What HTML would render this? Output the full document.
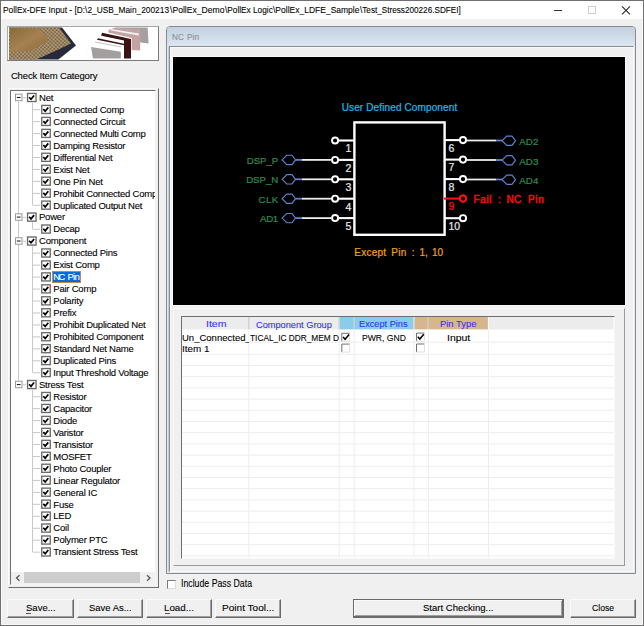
<!DOCTYPE html><html><head><meta charset="utf-8"><style>
*{margin:0;padding:0;box-sizing:border-box}
html,body{width:644px;height:626px;overflow:hidden;background:#f0f0f0;font-family:"Liberation Sans",sans-serif}
.t{position:absolute;white-space:nowrap;font-family:"Liberation Sans",sans-serif;-webkit-text-stroke:0.1px currentColor}
.a{position:absolute}
svg{position:absolute;left:0;top:0;overflow:visible}
</style></head><body>
<div class="a" style="left:0px;top:0px;width:644px;height:626px;background:#f0f0f0;border:1px solid #707070"></div>
<div class="a" style="left:1px;top:1px;width:642px;height:624px;background:transparent;border:1px solid #fafafa;border-top:0"></div>
<div class="a" style="left:1px;top:1px;width:642px;height:18px;background:#fff;"></div>
<div class="t" style="left:3.00px;top:4.70px;font-size:9.8px;line-height:9.8px;color:#000;transform:scaleX(0.8517);transform-origin:0 0;">PollEx-DFE Input - [D:\2_USB_Main_200213</div>
<div class="t" style="left:169.50px;top:4.70px;font-size:9.8px;line-height:9.8px;color:#000;transform:scaleX(0.8793);transform-origin:0 0;">\PollEx_Demo</div>
<div class="t" style="left:225.40px;top:4.70px;font-size:9.8px;line-height:9.8px;color:#000;transform:scaleX(0.8437);transform-origin:0 0;">\PollEx Logic</div>
<div class="t" style="left:273.20px;top:4.70px;font-size:9.8px;line-height:9.8px;color:#000;transform:scaleX(0.8677);transform-origin:0 0;">\PollEx_LDFE_Sample</div>
<div class="t" style="left:359.50px;top:4.70px;font-size:9.8px;line-height:9.8px;color:#000;transform:scaleX(0.8336);transform-origin:0 0;">\Test_Stress200226.SDFEI]</div>
<div class="a" style="left:554px;top:10px;width:8px;height:1px;background:#333;"></div>
<div class="a" style="left:588px;top:6px;width:8px;height:8px;background:transparent;border:1px solid #cfcfcf"></div>
<svg width="644" height="30"><path d="M622 6.3L630 14.3M630 6.3L622 14.3" stroke="#222" stroke-width="1.05"/></svg><div class="a" style="left:7px;top:26px;width:152px;height:35px;background:#fff;border:1px solid #a8a8a8;border-right-color:#7a7a7a;border-bottom-color:#7a7a7a"></div>
<svg width="170" height="70">
<defs><pattern id="pins" width="2.6" height="2.6" patternUnits="userSpaceOnUse" patternTransform="rotate(42)">
<rect width="2.6" height="2.6" fill="#505060"/><circle cx="1.3" cy="1.3" r="1.05" fill="#d2aa60"/></pattern>
<linearGradient id="gold" x1="0" y1="0" x2="1" y2="1"><stop offset="0" stop-color="#8a6a3a"/><stop offset="0.5" stop-color="#a58050"/><stop offset="1" stop-color="#8e6c3c"/></linearGradient></defs>
<polygon points="9,27.5 62,27.5 76,45.6 58.4,59.5 9,59.5" fill="#272a3a"/>
<polygon points="9,27.5 59,27.5 71,43.5 53,52 36,59.5 9,59.5" fill="url(#pins)"/>
<polygon points="10,28.2 38.5,28.2 47.9,38.1 47.9,41.3 29.8,51.2 10,51.8" fill="url(#gold)"/>
<polygon points="114.8,27.5 147.6,27.5 148.6,43.4 140.7,42.4" fill="#a6a0a0"/>
<polygon points="108.4,30 114.8,27.8 140.2,29.5 140.2,50.4 131.7,49.9 131.7,37.9 108.4,32.5" fill="#c3a4a4"/>
<polygon points="110.9,29 138.7,33.5 138.7,35.4 110.9,30.5" fill="#fff" opacity="0.85"/>
<polygon points="102,32.8 131,38.9 131,58.5 124,58.5 124,41 101,36.2" fill="#3a1414"/>
<polygon points="100,35.5 124,40.5 124,58.5 121,58.5 121,44 99,39" fill="#fff"/>
<polygon points="98,38.2 124,43.7 124,45.2 97,39.8" fill="#3a1414"/>
<polygon points="95,41.5 121,46.5 121,47.5 95,42.5" fill="#c8c4c4"/>
<polygon points="91,46.9 120.8,51.8 120.8,58.5 93,58.5" fill="#a39f9f"/>
</svg><div class="t" style="left:10.90px;top:71.26px;font-size:9.5px;line-height:9.5px;color:#000;letter-spacing:-0.144px;">Check Item Category</div>
<div class="a" style="left:8px;top:88px;width:151px;height:500px;background:#f0f0f0;border:1px solid #fafafa;border-right-color:#6e6e6e;border-bottom-color:#6e6e6e"></div>
<div class="a" style="left:10px;top:90px;width:146px;height:495px;background:#fff;border:1px solid #707070;border-right-color:#f4f4f4;border-bottom-color:#f4f4f4"></div>
<div class="a" style="left:11px;top:91px;width:144px;height:481px;overflow:hidden"><div class="a" style="left:-11px;top:-91px;width:170px;height:600px"><svg width="160" height="600">
<path d="M18.5 101.70V380.74" stroke="#c8c8c8"/>
<rect x="27.55" y="93.45" width="8.5" height="8.1" fill="#fff" stroke="#6a6a6a" stroke-width="1.35"/>
<path d="M29.10 97.20L31.00 99.30L34.10 95.50" stroke="#000" stroke-width="1.7" fill="none"/>
<rect x="15.5" y="94.20" width="6.5" height="6.5" fill="#fff" stroke="#9a9a9a"/>
<path d="M16.8 97.50h3.8" stroke="#222" stroke-width="1.1"/>
<path d="M22.5 97.70h3.5" stroke="#c8c8c8"/>
<rect x="41.75" y="105.41" width="8.5" height="8.1" fill="#fff" stroke="#6a6a6a" stroke-width="1.35"/>
<path d="M43.30 109.16L45.20 111.26L48.30 107.46" stroke="#000" stroke-width="1.7" fill="none"/>
<path d="M33 109.66h7" stroke="#c8c8c8"/>
<rect x="41.75" y="117.37" width="8.5" height="8.1" fill="#fff" stroke="#6a6a6a" stroke-width="1.35"/>
<path d="M43.30 121.12L45.20 123.22L48.30 119.42" stroke="#000" stroke-width="1.7" fill="none"/>
<path d="M33 121.62h7" stroke="#c8c8c8"/>
<rect x="41.75" y="129.33" width="8.5" height="8.1" fill="#fff" stroke="#6a6a6a" stroke-width="1.35"/>
<path d="M43.30 133.08L45.20 135.18L48.30 131.38" stroke="#000" stroke-width="1.7" fill="none"/>
<path d="M33 133.58h7" stroke="#c8c8c8"/>
<rect x="41.75" y="141.29" width="8.5" height="8.1" fill="#fff" stroke="#6a6a6a" stroke-width="1.35"/>
<path d="M43.30 145.04L45.20 147.14L48.30 143.34" stroke="#000" stroke-width="1.7" fill="none"/>
<path d="M33 145.54h7" stroke="#c8c8c8"/>
<rect x="41.75" y="153.25" width="8.5" height="8.1" fill="#fff" stroke="#6a6a6a" stroke-width="1.35"/>
<path d="M43.30 157.00L45.20 159.10L48.30 155.30" stroke="#000" stroke-width="1.7" fill="none"/>
<path d="M33 157.50h7" stroke="#c8c8c8"/>
<rect x="41.75" y="165.21" width="8.5" height="8.1" fill="#fff" stroke="#6a6a6a" stroke-width="1.35"/>
<path d="M43.30 168.96L45.20 171.06L48.30 167.26" stroke="#000" stroke-width="1.7" fill="none"/>
<path d="M33 169.46h7" stroke="#c8c8c8"/>
<rect x="41.75" y="177.17" width="8.5" height="8.1" fill="#fff" stroke="#6a6a6a" stroke-width="1.35"/>
<path d="M43.30 180.92L45.20 183.02L48.30 179.22" stroke="#000" stroke-width="1.7" fill="none"/>
<path d="M33 181.42h7" stroke="#c8c8c8"/>
<rect x="41.75" y="189.13" width="8.5" height="8.1" fill="#fff" stroke="#6a6a6a" stroke-width="1.35"/>
<path d="M43.30 192.88L45.20 194.98L48.30 191.18" stroke="#000" stroke-width="1.7" fill="none"/>
<path d="M33 193.38h7" stroke="#c8c8c8"/>
<rect x="41.75" y="201.09" width="8.5" height="8.1" fill="#fff" stroke="#6a6a6a" stroke-width="1.35"/>
<path d="M43.30 204.84L45.20 206.94L48.30 203.14" stroke="#000" stroke-width="1.7" fill="none"/>
<path d="M33 205.34h7" stroke="#c8c8c8"/>
<rect x="27.55" y="213.05" width="8.5" height="8.1" fill="#fff" stroke="#6a6a6a" stroke-width="1.35"/>
<path d="M29.10 216.80L31.00 218.90L34.10 215.10" stroke="#000" stroke-width="1.7" fill="none"/>
<rect x="15.5" y="213.80" width="6.5" height="6.5" fill="#fff" stroke="#9a9a9a"/>
<path d="M16.8 217.10h3.8" stroke="#222" stroke-width="1.1"/>
<path d="M22.5 217.30h3.5" stroke="#c8c8c8"/>
<rect x="41.75" y="225.01" width="8.5" height="8.1" fill="#fff" stroke="#6a6a6a" stroke-width="1.35"/>
<path d="M43.30 228.76L45.20 230.86L48.30 227.06" stroke="#000" stroke-width="1.7" fill="none"/>
<path d="M33 229.26h7" stroke="#c8c8c8"/>
<rect x="27.55" y="236.97" width="8.5" height="8.1" fill="#fff" stroke="#6a6a6a" stroke-width="1.35"/>
<path d="M29.10 240.72L31.00 242.82L34.10 239.02" stroke="#000" stroke-width="1.7" fill="none"/>
<rect x="15.5" y="237.72" width="6.5" height="6.5" fill="#fff" stroke="#9a9a9a"/>
<path d="M16.8 241.02h3.8" stroke="#222" stroke-width="1.1"/>
<path d="M22.5 241.22h3.5" stroke="#c8c8c8"/>
<rect x="41.75" y="248.93" width="8.5" height="8.1" fill="#fff" stroke="#6a6a6a" stroke-width="1.35"/>
<path d="M43.30 252.68L45.20 254.78L48.30 250.98" stroke="#000" stroke-width="1.7" fill="none"/>
<path d="M33 253.18h7" stroke="#c8c8c8"/>
<rect x="41.75" y="260.89" width="8.5" height="8.1" fill="#fff" stroke="#6a6a6a" stroke-width="1.35"/>
<path d="M43.30 264.64L45.20 266.74L48.30 262.94" stroke="#000" stroke-width="1.7" fill="none"/>
<path d="M33 265.14h7" stroke="#c8c8c8"/>
<rect x="41.75" y="272.85" width="8.5" height="8.1" fill="#fff" stroke="#6a6a6a" stroke-width="1.35"/>
<path d="M43.30 276.60L45.20 278.70L48.30 274.90" stroke="#000" stroke-width="1.7" fill="none"/>
<path d="M33 277.10h7" stroke="#c8c8c8"/>
<rect x="41.75" y="284.81" width="8.5" height="8.1" fill="#fff" stroke="#6a6a6a" stroke-width="1.35"/>
<path d="M43.30 288.56L45.20 290.66L48.30 286.86" stroke="#000" stroke-width="1.7" fill="none"/>
<path d="M33 289.06h7" stroke="#c8c8c8"/>
<rect x="41.75" y="296.77" width="8.5" height="8.1" fill="#fff" stroke="#6a6a6a" stroke-width="1.35"/>
<path d="M43.30 300.52L45.20 302.62L48.30 298.82" stroke="#000" stroke-width="1.7" fill="none"/>
<path d="M33 301.02h7" stroke="#c8c8c8"/>
<rect x="41.75" y="308.73" width="8.5" height="8.1" fill="#fff" stroke="#6a6a6a" stroke-width="1.35"/>
<path d="M43.30 312.48L45.20 314.58L48.30 310.78" stroke="#000" stroke-width="1.7" fill="none"/>
<path d="M33 312.98h7" stroke="#c8c8c8"/>
<rect x="41.75" y="320.69" width="8.5" height="8.1" fill="#fff" stroke="#6a6a6a" stroke-width="1.35"/>
<path d="M43.30 324.44L45.20 326.54L48.30 322.74" stroke="#000" stroke-width="1.7" fill="none"/>
<path d="M33 324.94h7" stroke="#c8c8c8"/>
<rect x="41.75" y="332.65" width="8.5" height="8.1" fill="#fff" stroke="#6a6a6a" stroke-width="1.35"/>
<path d="M43.30 336.40L45.20 338.50L48.30 334.70" stroke="#000" stroke-width="1.7" fill="none"/>
<path d="M33 336.90h7" stroke="#c8c8c8"/>
<rect x="41.75" y="344.61" width="8.5" height="8.1" fill="#fff" stroke="#6a6a6a" stroke-width="1.35"/>
<path d="M43.30 348.36L45.20 350.46L48.30 346.66" stroke="#000" stroke-width="1.7" fill="none"/>
<path d="M33 348.86h7" stroke="#c8c8c8"/>
<rect x="41.75" y="356.57" width="8.5" height="8.1" fill="#fff" stroke="#6a6a6a" stroke-width="1.35"/>
<path d="M43.30 360.32L45.20 362.42L48.30 358.62" stroke="#000" stroke-width="1.7" fill="none"/>
<path d="M33 360.82h7" stroke="#c8c8c8"/>
<rect x="41.75" y="368.53" width="8.5" height="8.1" fill="#fff" stroke="#6a6a6a" stroke-width="1.35"/>
<path d="M43.30 372.28L45.20 374.38L48.30 370.58" stroke="#000" stroke-width="1.7" fill="none"/>
<path d="M33 372.78h7" stroke="#c8c8c8"/>
<rect x="27.55" y="380.49" width="8.5" height="8.1" fill="#fff" stroke="#6a6a6a" stroke-width="1.35"/>
<path d="M29.10 384.24L31.00 386.34L34.10 382.54" stroke="#000" stroke-width="1.7" fill="none"/>
<rect x="15.5" y="381.24" width="6.5" height="6.5" fill="#fff" stroke="#9a9a9a"/>
<path d="M16.8 384.54h3.8" stroke="#222" stroke-width="1.1"/>
<path d="M22.5 384.74h3.5" stroke="#c8c8c8"/>
<rect x="41.75" y="392.45" width="8.5" height="8.1" fill="#fff" stroke="#6a6a6a" stroke-width="1.35"/>
<path d="M43.30 396.20L45.20 398.30L48.30 394.50" stroke="#000" stroke-width="1.7" fill="none"/>
<path d="M33 396.70h7" stroke="#c8c8c8"/>
<rect x="41.75" y="404.41" width="8.5" height="8.1" fill="#fff" stroke="#6a6a6a" stroke-width="1.35"/>
<path d="M43.30 408.16L45.20 410.26L48.30 406.46" stroke="#000" stroke-width="1.7" fill="none"/>
<path d="M33 408.66h7" stroke="#c8c8c8"/>
<rect x="41.75" y="416.37" width="8.5" height="8.1" fill="#fff" stroke="#6a6a6a" stroke-width="1.35"/>
<path d="M43.30 420.12L45.20 422.22L48.30 418.42" stroke="#000" stroke-width="1.7" fill="none"/>
<path d="M33 420.62h7" stroke="#c8c8c8"/>
<rect x="41.75" y="428.33" width="8.5" height="8.1" fill="#fff" stroke="#6a6a6a" stroke-width="1.35"/>
<path d="M43.30 432.08L45.20 434.18L48.30 430.38" stroke="#000" stroke-width="1.7" fill="none"/>
<path d="M33 432.58h7" stroke="#c8c8c8"/>
<rect x="41.75" y="440.29" width="8.5" height="8.1" fill="#fff" stroke="#6a6a6a" stroke-width="1.35"/>
<path d="M43.30 444.04L45.20 446.14L48.30 442.34" stroke="#000" stroke-width="1.7" fill="none"/>
<path d="M33 444.54h7" stroke="#c8c8c8"/>
<rect x="41.75" y="452.25" width="8.5" height="8.1" fill="#fff" stroke="#6a6a6a" stroke-width="1.35"/>
<path d="M43.30 456.00L45.20 458.10L48.30 454.30" stroke="#000" stroke-width="1.7" fill="none"/>
<path d="M33 456.50h7" stroke="#c8c8c8"/>
<rect x="41.75" y="464.21" width="8.5" height="8.1" fill="#fff" stroke="#6a6a6a" stroke-width="1.35"/>
<path d="M43.30 467.96L45.20 470.06L48.30 466.26" stroke="#000" stroke-width="1.7" fill="none"/>
<path d="M33 468.46h7" stroke="#c8c8c8"/>
<rect x="41.75" y="476.17" width="8.5" height="8.1" fill="#fff" stroke="#6a6a6a" stroke-width="1.35"/>
<path d="M43.30 479.92L45.20 482.02L48.30 478.22" stroke="#000" stroke-width="1.7" fill="none"/>
<path d="M33 480.42h7" stroke="#c8c8c8"/>
<rect x="41.75" y="488.13" width="8.5" height="8.1" fill="#fff" stroke="#6a6a6a" stroke-width="1.35"/>
<path d="M43.30 491.88L45.20 493.98L48.30 490.18" stroke="#000" stroke-width="1.7" fill="none"/>
<path d="M33 492.38h7" stroke="#c8c8c8"/>
<rect x="41.75" y="500.09" width="8.5" height="8.1" fill="#fff" stroke="#6a6a6a" stroke-width="1.35"/>
<path d="M43.30 503.84L45.20 505.94L48.30 502.14" stroke="#000" stroke-width="1.7" fill="none"/>
<path d="M33 504.34h7" stroke="#c8c8c8"/>
<rect x="41.75" y="512.05" width="8.5" height="8.1" fill="#fff" stroke="#6a6a6a" stroke-width="1.35"/>
<path d="M43.30 515.80L45.20 517.90L48.30 514.10" stroke="#000" stroke-width="1.7" fill="none"/>
<path d="M33 516.30h7" stroke="#c8c8c8"/>
<rect x="41.75" y="524.01" width="8.5" height="8.1" fill="#fff" stroke="#6a6a6a" stroke-width="1.35"/>
<path d="M43.30 527.76L45.20 529.86L48.30 526.06" stroke="#000" stroke-width="1.7" fill="none"/>
<path d="M33 528.26h7" stroke="#c8c8c8"/>
<rect x="41.75" y="535.97" width="8.5" height="8.1" fill="#fff" stroke="#6a6a6a" stroke-width="1.35"/>
<path d="M43.30 539.72L45.20 541.82L48.30 538.02" stroke="#000" stroke-width="1.7" fill="none"/>
<path d="M33 540.22h7" stroke="#c8c8c8"/>
<rect x="41.75" y="547.93" width="8.5" height="8.1" fill="#fff" stroke="#6a6a6a" stroke-width="1.35"/>
<path d="M43.30 551.68L45.20 553.78L48.30 549.98" stroke="#000" stroke-width="1.7" fill="none"/>
<path d="M33 552.18h7" stroke="#c8c8c8"/>
<path d="M32.5 102.70V205.34" stroke="#c8c8c8"/>
<path d="M32.5 222.30V229.26" stroke="#c8c8c8"/>
<path d="M32.5 246.22V372.78" stroke="#c8c8c8"/>
<path d="M32.5 389.74V552.18" stroke="#c8c8c8"/>
</svg><div class="t" style="left:39.00px;top:92.86px;font-size:9.5px;line-height:9.5px;color:#000;letter-spacing:-0.220px;">Net</div>
<div class="t" style="left:53.30px;top:104.82px;font-size:9.5px;line-height:9.5px;color:#000;letter-spacing:-0.220px;">Connected Comp</div>
<div class="t" style="left:53.30px;top:116.78px;font-size:9.5px;line-height:9.5px;color:#000;letter-spacing:-0.220px;">Connected Circuit</div>
<div class="t" style="left:53.30px;top:128.74px;font-size:9.5px;line-height:9.5px;color:#000;letter-spacing:-0.220px;">Connected Multi Comp</div>
<div class="t" style="left:53.30px;top:140.70px;font-size:9.5px;line-height:9.5px;color:#000;letter-spacing:-0.220px;">Damping Resistor</div>
<div class="t" style="left:53.30px;top:152.66px;font-size:9.5px;line-height:9.5px;color:#000;letter-spacing:-0.220px;">Differential Net</div>
<div class="t" style="left:53.30px;top:164.62px;font-size:9.5px;line-height:9.5px;color:#000;letter-spacing:-0.220px;">Exist Net</div>
<div class="t" style="left:53.30px;top:176.58px;font-size:9.5px;line-height:9.5px;color:#000;letter-spacing:-0.220px;">One Pin Net</div>
<div class="t" style="left:53.30px;top:188.54px;font-size:9.5px;line-height:9.5px;color:#000;letter-spacing:-0.220px;">Prohibit Connected Comp</div>
<div class="t" style="left:53.30px;top:200.50px;font-size:9.5px;line-height:9.5px;color:#000;letter-spacing:-0.220px;">Duplicated Output Net</div>
<div class="t" style="left:39.00px;top:212.46px;font-size:9.5px;line-height:9.5px;color:#000;letter-spacing:-0.220px;">Power</div>
<div class="t" style="left:53.30px;top:224.42px;font-size:9.5px;line-height:9.5px;color:#000;letter-spacing:-0.220px;">Decap</div>
<div class="t" style="left:39.00px;top:236.38px;font-size:9.5px;line-height:9.5px;color:#000;letter-spacing:-0.220px;">Component</div>
<div class="t" style="left:53.30px;top:248.34px;font-size:9.5px;line-height:9.5px;color:#000;letter-spacing:-0.220px;">Connected Pins</div>
<div class="t" style="left:53.30px;top:260.30px;font-size:9.5px;line-height:9.5px;color:#000;letter-spacing:-0.220px;">Exist Comp</div>
<div class="a" style="left:52px;top:271px;width:29px;height:12px;background:#0a6ad6;border:1px solid #c08a50"></div>
<div class="t" style="left:53.30px;top:272.26px;font-size:9.5px;line-height:9.5px;color:#fff;letter-spacing:-1.561px;">NC</div>
<div class="t" style="left:67.40px;top:272.26px;font-size:9.5px;line-height:9.5px;color:#fff;letter-spacing:-0.644px;">Pin</div>
<div class="t" style="left:53.30px;top:284.22px;font-size:9.5px;line-height:9.5px;color:#000;letter-spacing:-0.220px;">Pair Comp</div>
<div class="t" style="left:53.30px;top:296.18px;font-size:9.5px;line-height:9.5px;color:#000;letter-spacing:-0.220px;">Polarity</div>
<div class="t" style="left:53.30px;top:308.14px;font-size:9.5px;line-height:9.5px;color:#000;letter-spacing:-0.220px;">Prefix</div>
<div class="t" style="left:53.30px;top:320.10px;font-size:9.5px;line-height:9.5px;color:#000;letter-spacing:-0.220px;">Prohibit Duplicated Net</div>
<div class="t" style="left:53.30px;top:332.06px;font-size:9.5px;line-height:9.5px;color:#000;letter-spacing:-0.220px;">Prohibited Component</div>
<div class="t" style="left:53.30px;top:344.02px;font-size:9.5px;line-height:9.5px;color:#000;letter-spacing:-0.220px;">Standard Net Name</div>
<div class="t" style="left:53.30px;top:355.98px;font-size:9.5px;line-height:9.5px;color:#000;letter-spacing:-0.220px;">Duplicated Pins</div>
<div class="t" style="left:53.30px;top:367.94px;font-size:9.5px;line-height:9.5px;color:#000;letter-spacing:-0.220px;">Input Threshold Voltage</div>
<div class="t" style="left:39.00px;top:379.90px;font-size:9.5px;line-height:9.5px;color:#000;letter-spacing:-0.220px;">Stress Test</div>
<div class="t" style="left:53.30px;top:391.86px;font-size:9.5px;line-height:9.5px;color:#000;letter-spacing:-0.220px;">Resistor</div>
<div class="t" style="left:53.30px;top:403.82px;font-size:9.5px;line-height:9.5px;color:#000;letter-spacing:-0.220px;">Capacitor</div>
<div class="t" style="left:53.30px;top:415.78px;font-size:9.5px;line-height:9.5px;color:#000;letter-spacing:-0.220px;">Diode</div>
<div class="t" style="left:53.30px;top:427.74px;font-size:9.5px;line-height:9.5px;color:#000;letter-spacing:-0.220px;">Varistor</div>
<div class="t" style="left:53.30px;top:439.70px;font-size:9.5px;line-height:9.5px;color:#000;letter-spacing:-0.220px;">Transistor</div>
<div class="t" style="left:53.30px;top:451.66px;font-size:9.5px;line-height:9.5px;color:#000;letter-spacing:-0.220px;">MOSFET</div>
<div class="t" style="left:53.30px;top:463.62px;font-size:9.5px;line-height:9.5px;color:#000;letter-spacing:-0.220px;">Photo Coupler</div>
<div class="t" style="left:53.30px;top:475.58px;font-size:9.5px;line-height:9.5px;color:#000;letter-spacing:-0.220px;">Linear Regulator</div>
<div class="t" style="left:53.30px;top:487.54px;font-size:9.5px;line-height:9.5px;color:#000;letter-spacing:-0.220px;">General IC</div>
<div class="t" style="left:53.30px;top:499.50px;font-size:9.5px;line-height:9.5px;color:#000;letter-spacing:-0.220px;">Fuse</div>
<div class="t" style="left:53.30px;top:511.46px;font-size:9.5px;line-height:9.5px;color:#000;letter-spacing:-0.220px;">LED</div>
<div class="t" style="left:53.30px;top:523.42px;font-size:9.5px;line-height:9.5px;color:#000;letter-spacing:-0.220px;">Coil</div>
<div class="t" style="left:53.30px;top:535.38px;font-size:9.5px;line-height:9.5px;color:#000;letter-spacing:-0.220px;">Polymer PTC</div>
<div class="t" style="left:53.30px;top:547.34px;font-size:9.5px;line-height:9.5px;color:#000;letter-spacing:-0.220px;">Transient Stress Test</div>
</div></div><div class="a" style="left:11px;top:572px;width:144px;height:12px;background:#f0f0f0;"></div>
<div class="a" style="left:24px;top:572px;width:116px;height:11px;background:#cdcdcd;"></div>
<svg width="170" height="600"><path d="M19.5 575.2L16.5 578L19.5 580.8" stroke="#555" fill="none" stroke-width="1.3"/><path d="M147 575.2L150 578L147 580.8" stroke="#555" fill="none" stroke-width="1.3"/></svg><div class="a" style="left:166px;top:26px;width:470px;height:548px;background:#f0f0f0;border:1px solid #8a8a8a;border-radius:4px 4px 0 0"></div>
<div class="a" style="left:167px;top:27px;width:468px;height:19px;background:linear-gradient(#c2d1df,#dae6f2);border-radius:3px 3px 0 0"></div>
<div class="a" style="left:167px;top:46px;width:468px;height:527px;background:transparent;border:1px solid #dfe8f3;border-top:0"></div>
<div class="a" style="left:168px;top:46px;width:1px;height:526px;background:#c4ccd4;"></div>
<div class="a" style="left:169px;top:46px;width:465px;height:526px;background:transparent;border:1px solid #8c8c8c;border-right-color:#fafafa;border-bottom-color:#fafafa"></div>
<div class="a" style="left:170px;top:47px;width:1px;height:523px;background:#fafafa;"></div>
<div class="a" style="left:170px;top:47px;width:462px;height:1px;background:#fafafa;"></div>
<div class="t" style="left:172.00px;top:32.63px;font-size:9.3px;line-height:9.3px;color:#8e8e8e;transform:scaleX(0.8785);transform-origin:0 0;">NC</div>
<div class="t" style="left:186.60px;top:32.63px;font-size:9.3px;line-height:9.3px;color:#8e8e8e;transform:scaleX(0.9002);transform-origin:0 0;">Pin</div>
<div class="a" style="left:172px;top:56px;width:454px;height:250px;background:#000;border:1px solid #fafafa"></div>
<div class="a" style="left:173px;top:308px;width:452px;height:258px;background:transparent;border:1px solid #fafafa;border-right-color:#9a9a9a;border-bottom-color:#9a9a9a"></div>
<div class="a" style="left:181px;top:316px;width:434px;height:243px;background:#fff;border:1px solid #6e6e6e;border-right-color:#f8f8f8;border-bottom-color:#f8f8f8"></div>
<svg width="644" height="626" font-family="Liberation Sans, sans-serif"><g>
<text x="341.7" y="111.2" font-size="10" fill="#1cbae6" text-anchor="start" textLength="115.5" lengthAdjust="spacing" stroke="#1cbae6" stroke-width="0.22" >User Defined Component</text>
<rect x="354.4" y="122.4" width="90.2" height="112.4" fill="none" stroke="#fff" stroke-width="2.4"/>
<path d="M338 140.5H354" stroke="#fff" stroke-width="2.1"/>
<circle cx="335.1" cy="140.5" r="3.05" fill="#000" stroke="#fff" stroke-width="1.9"/>
<text x="345.4" y="152.3" font-size="10.5" fill="#e8e8e8" text-anchor="start" stroke="#e8e8e8" stroke-width="0.22" >1</text>
<path d="M338 159.9H354" stroke="#fff" stroke-width="2.1"/>
<circle cx="335.1" cy="159.9" r="3.05" fill="#000" stroke="#fff" stroke-width="1.9"/>
<text x="345.4" y="171.70000000000002" font-size="10.5" fill="#e8e8e8" text-anchor="start" stroke="#e8e8e8" stroke-width="0.22" >2</text>
<path d="M301.5 159.9H332.2" stroke="#ececec" stroke-width="1.8"/>
<path d="M295.5 159.9H301.5" stroke="#6282d0" stroke-width="1.8"/>
<polygon points="282.1,159.9 286.8,155.25 292.0,155.25 295.5,159.9 292.0,164.55 286.8,164.55" fill="none" stroke="#6282d0" stroke-width="1.15"/>
<text x="246.79999999999998" y="163.70000000000002" font-size="9.7" fill="#2b8a50" text-anchor="start" textLength="31.4" lengthAdjust="spacing" stroke="#2b8a50" stroke-width="0.22" >DSP_P</text>
<path d="M338 179.3H354" stroke="#fff" stroke-width="2.1"/>
<circle cx="335.1" cy="179.3" r="3.05" fill="#000" stroke="#fff" stroke-width="1.9"/>
<text x="345.4" y="191.10000000000002" font-size="10.5" fill="#e8e8e8" text-anchor="start" stroke="#e8e8e8" stroke-width="0.22" >3</text>
<path d="M301.5 179.3H332.2" stroke="#ececec" stroke-width="1.8"/>
<path d="M295.5 179.3H301.5" stroke="#6282d0" stroke-width="1.8"/>
<polygon points="282.1,179.3 286.8,174.65 292.0,174.65 295.5,179.3 292.0,183.95000000000002 286.8,183.95000000000002" fill="none" stroke="#6282d0" stroke-width="1.15"/>
<text x="246.2" y="183.10000000000002" font-size="9.7" fill="#2b8a50" text-anchor="start" textLength="32" lengthAdjust="spacing" stroke="#2b8a50" stroke-width="0.22" >DSP_N</text>
<path d="M338 198.7H354" stroke="#fff" stroke-width="2.1"/>
<circle cx="335.1" cy="198.7" r="3.05" fill="#000" stroke="#fff" stroke-width="1.9"/>
<text x="345.4" y="210.5" font-size="10.5" fill="#e8e8e8" text-anchor="start" stroke="#e8e8e8" stroke-width="0.22" >4</text>
<path d="M301.5 198.7H332.2" stroke="#ececec" stroke-width="1.8"/>
<path d="M295.5 198.7H301.5" stroke="#6282d0" stroke-width="1.8"/>
<polygon points="282.1,198.7 286.8,194.04999999999998 292.0,194.04999999999998 295.5,198.7 292.0,203.35 286.8,203.35" fill="none" stroke="#6282d0" stroke-width="1.15"/>
<text x="258.59999999999997" y="202.5" font-size="9.7" fill="#2b8a50" text-anchor="start" textLength="19.6" lengthAdjust="spacing" stroke="#2b8a50" stroke-width="0.22" >CLK</text>
<path d="M338 218.1H354" stroke="#fff" stroke-width="2.1"/>
<circle cx="335.1" cy="218.1" r="3.05" fill="#000" stroke="#fff" stroke-width="1.9"/>
<text x="345.4" y="229.9" font-size="10.5" fill="#e8e8e8" text-anchor="start" stroke="#e8e8e8" stroke-width="0.22" >5</text>
<path d="M301.5 218.1H332.2" stroke="#ececec" stroke-width="1.8"/>
<path d="M295.5 218.1H301.5" stroke="#6282d0" stroke-width="1.8"/>
<polygon points="282.1,218.1 286.8,213.45 292.0,213.45 295.5,218.1 292.0,222.75 286.8,222.75" fill="none" stroke="#6282d0" stroke-width="1.15"/>
<text x="260.0" y="221.9" font-size="9.7" fill="#2b8a50" text-anchor="start" textLength="18.2" lengthAdjust="spacing" stroke="#2b8a50" stroke-width="0.22" >AD1</text>
<path d="M444 140.1H460.5" stroke="#fff" stroke-width="2.1"/>
<circle cx="463" cy="140.1" r="3.1" fill="#000" stroke="#fff" stroke-width="1.9"/>
<text x="448.4" y="151.9" font-size="10.5" fill="#e8e8e8" text-anchor="start" stroke="#e8e8e8" stroke-width="0.22" >6</text>
<path d="M466.5 140.5H496" stroke="#ececec" stroke-width="1.8"/>
<path d="M496 140.5H502.2" stroke="#6282d0" stroke-width="1.8"/>
<polygon points="502.1,140.7 506.8,136.04999999999998 512.0,136.04999999999998 515.5,140.7 512.0,145.35 506.8,145.35" fill="none" stroke="#6282d0" stroke-width="1.15"/>
<text x="519.2" y="145.0" font-size="9.8" fill="#2b8a50" text-anchor="start" textLength="19.2" lengthAdjust="spacing" stroke="#2b8a50" stroke-width="0.22" >AD2</text>
<path d="M444 159.6H460.5" stroke="#fff" stroke-width="2.1"/>
<circle cx="463" cy="159.6" r="3.1" fill="#000" stroke="#fff" stroke-width="1.9"/>
<text x="448.4" y="171.4" font-size="10.5" fill="#e8e8e8" text-anchor="start" stroke="#e8e8e8" stroke-width="0.22" >7</text>
<path d="M466.5 160.0H496" stroke="#ececec" stroke-width="1.8"/>
<path d="M496 160.0H502.2" stroke="#6282d0" stroke-width="1.8"/>
<polygon points="502.1,160.2 506.8,155.54999999999998 512.0,155.54999999999998 515.5,160.2 512.0,164.85 506.8,164.85" fill="none" stroke="#6282d0" stroke-width="1.15"/>
<text x="519.2" y="164.5" font-size="9.8" fill="#2b8a50" text-anchor="start" textLength="19.2" lengthAdjust="spacing" stroke="#2b8a50" stroke-width="0.22" >AD3</text>
<path d="M444 179.1H460.5" stroke="#fff" stroke-width="2.1"/>
<circle cx="463" cy="179.1" r="3.1" fill="#000" stroke="#fff" stroke-width="1.9"/>
<text x="448.4" y="190.9" font-size="10.5" fill="#e8e8e8" text-anchor="start" stroke="#e8e8e8" stroke-width="0.22" >8</text>
<path d="M466.5 179.5H496" stroke="#ececec" stroke-width="1.8"/>
<path d="M496 179.5H502.2" stroke="#6282d0" stroke-width="1.8"/>
<polygon points="502.1,179.7 506.8,175.04999999999998 512.0,175.04999999999998 515.5,179.7 512.0,184.35 506.8,184.35" fill="none" stroke="#6282d0" stroke-width="1.15"/>
<text x="519.2" y="184.0" font-size="9.8" fill="#2b8a50" text-anchor="start" textLength="19.2" lengthAdjust="spacing" stroke="#2b8a50" stroke-width="0.22" >AD4</text>
<path d="M444 198.6H460.5" stroke="#ff1010" stroke-width="2.1"/>
<circle cx="463" cy="198.6" r="3.2" fill="#000" stroke="#ff1010" stroke-width="2.1"/>
<text x="448.4" y="210.4" font-size="10.5" fill="#ff1010" text-anchor="start" stroke="#ff1010" stroke-width="0.22" >9</text>
<path d="M444 218.2H460.5" stroke="#fff" stroke-width="2.1"/>
<circle cx="463" cy="218.2" r="3.1" fill="#000" stroke="#fff" stroke-width="1.9"/>
<text x="448.4" y="230.0" font-size="10.5" fill="#e8e8e8" text-anchor="start" stroke="#e8e8e8" stroke-width="0.22" >10</text>
<text x="473.5" y="202.5" font-size="10" fill="#ff0a0a" text-anchor="start" textLength="18.0" lengthAdjust="spacing" stroke="#ff0a0a" stroke-width="0.45" >Fail</text>
<text x="498.0" y="202.5" font-size="10" fill="#ff0a0a" text-anchor="start" stroke="#ff0a0a" stroke-width="0.45" >:</text>
<text x="506.4" y="202.5" font-size="10" fill="#ff0a0a" text-anchor="start" textLength="14.900000000000034" lengthAdjust="spacing" stroke="#ff0a0a" stroke-width="0.45" >NC</text>
<text x="527.9000000000001" y="202.5" font-size="10" fill="#ff0a0a" text-anchor="start" textLength="15.799999999999955" lengthAdjust="spacing" stroke="#ff0a0a" stroke-width="0.45" >Pin</text>
<text x="354.3" y="255.9" font-size="10" fill="#f0a020" text-anchor="start" textLength="31.80000000000001" lengthAdjust="spacing" stroke="#f0a020" stroke-width="0.22" >Except</text>
<text x="391.20000000000005" y="255.9" font-size="10" fill="#f0a020" text-anchor="start" textLength="15.099999999999966" lengthAdjust="spacing" stroke="#f0a020" stroke-width="0.22" >Pin</text>
<text x="411.70000000000005" y="255.9" font-size="10" fill="#f0a020" text-anchor="start" stroke="#f0a020" stroke-width="0.22" >:</text>
<text x="419.5" y="255.9" font-size="10" fill="#f0a020" text-anchor="start" stroke="#f0a020" stroke-width="0.22" >1,</text>
<text x="431.90000000000003" y="255.9" font-size="10" fill="#f0a020" text-anchor="start" stroke="#f0a020" stroke-width="0.22" >10</text>
</g></svg><svg width="644" height="626" font-family="Liberation Sans, sans-serif">
<rect x="182" y="317" width="66.20" height="12.4" fill="#ececec"/>
<rect x="249.3" y="317" width="88.90" height="12.4" fill="#ececec"/>
<rect x="339.5" y="317" width="14.30" height="12.4" fill="#89cdea"/>
<rect x="354.6" y="317" width="58.60" height="12.4" fill="#89cdea"/>
<rect x="414.6" y="317" width="13.20" height="12.4" fill="#d7b68d"/>
<rect x="429" y="317" width="58.90" height="12.4" fill="#d7b68d"/>
<rect x="488.8" y="317" width="124.70" height="12.4" fill="#ececec"/>
<rect x="248.2" y="317" width="1.2" height="12.4" fill="#c8c8c8"/>
<rect x="338.4" y="317" width="1.2" height="12.4" fill="#c8c8c8"/>
<rect x="353.7" y="317" width="1.2" height="12.4" fill="#c8c8c8"/>
<rect x="413.4" y="317" width="1.2" height="12.4" fill="#c8c8c8"/>
<rect x="427.8" y="317" width="1.2" height="12.4" fill="#c8c8c8"/>
<path d="M182 342.20H613.5" stroke="#ededed" stroke-width="1"/>
<path d="M182 354.30H613.5" stroke="#ededed" stroke-width="1"/>
<path d="M182 365.50H613.5" stroke="#ededed" stroke-width="1"/>
<path d="M182 376.70H613.5" stroke="#ededed" stroke-width="1"/>
<path d="M182 387.90H613.5" stroke="#ededed" stroke-width="1"/>
<path d="M182 399.10H613.5" stroke="#ededed" stroke-width="1"/>
<path d="M182 410.30H613.5" stroke="#ededed" stroke-width="1"/>
<path d="M182 421.50H613.5" stroke="#ededed" stroke-width="1"/>
<path d="M182 432.70H613.5" stroke="#ededed" stroke-width="1"/>
<path d="M182 443.90H613.5" stroke="#ededed" stroke-width="1"/>
<path d="M182 455.10H613.5" stroke="#ededed" stroke-width="1"/>
<path d="M182 466.30H613.5" stroke="#ededed" stroke-width="1"/>
<path d="M182 477.50H613.5" stroke="#ededed" stroke-width="1"/>
<path d="M182 488.70H613.5" stroke="#ededed" stroke-width="1"/>
<path d="M182 499.90H613.5" stroke="#ededed" stroke-width="1"/>
<path d="M182 511.10H613.5" stroke="#ededed" stroke-width="1"/>
<path d="M182 522.30H613.5" stroke="#ededed" stroke-width="1"/>
<path d="M182 533.50H613.5" stroke="#ededed" stroke-width="1"/>
<path d="M182 544.70H613.5" stroke="#ededed" stroke-width="1"/>
<path d="M182 555.90H613.5" stroke="#ededed" stroke-width="1"/>
<path d="M248.8 329.5V557.7" stroke="#ededed" stroke-width="1"/>
<path d="M339.2 329.5V557.7" stroke="#ededed" stroke-width="1"/>
<path d="M354.2 329.5V557.7" stroke="#ededed" stroke-width="1"/>
<path d="M413.9 329.5V557.7" stroke="#ededed" stroke-width="1"/>
<path d="M428.3 329.5V557.7" stroke="#ededed" stroke-width="1"/>
<path d="M488.5 329.5V557.7" stroke="#ededed" stroke-width="1"/>
<path d="M341.8 341.3V333.3H349.8" stroke="#707070" fill="none"/><path d="M341.8 341.3H349.8V333.3" stroke="#e0e0e0" fill="none"/><path d="M343.1 337.0l2 2.3l4-4.8" stroke="#000" stroke-width="1.5" fill="none"/>
<path d="M341.8 352.1V344.1H349.8" stroke="#707070" fill="none"/><path d="M341.8 352.1H349.8V344.1" stroke="#e0e0e0" fill="none"/>
<path d="M416.5 341.1V333.1H424.5" stroke="#707070" fill="none"/><path d="M416.5 341.1H424.5V333.1" stroke="#e0e0e0" fill="none"/><path d="M417.8 336.8l2 2.3l4-4.8" stroke="#000" stroke-width="1.5" fill="none"/>
<path d="M416.5 352.0V344.0H424.5" stroke="#707070" fill="none"/><path d="M416.5 352.0H424.5V344.0" stroke="#e0e0e0" fill="none"/>
</svg><div class="t" style="left:205.50px;top:319.47px;font-size:9.6px;line-height:9.6px;color:#3434f4;transform:scaleX(1.0980);transform-origin:0 0;">Item</div>
<div class="t" style="left:255.90px;top:319.67px;font-size:9.6px;line-height:9.6px;color:#3434f4;transform:scaleX(0.9610);transform-origin:0 0;">Component Group</div>
<div class="t" style="left:359.10px;top:319.47px;font-size:9.6px;line-height:9.6px;color:#3434f4;transform:scaleX(0.9587);transform-origin:0 0;">Except Pins</div>
<div class="t" style="left:440.20px;top:319.37px;font-size:9.6px;line-height:9.6px;color:#3434f4;transform:scaleX(0.9789);transform-origin:0 0;">Pin Type</div>
<div class="a" style="left:182px;top:330px;width:66.5px;height:14px;overflow:hidden"><div class="t" style="left:0.30px;top:2.67px;font-size:9.6px;line-height:9.6px;color:#000;transform:scaleX(0.9915);transform-origin:0 0;">Un_Connected_Item</div>
</div><div class="a" style="left:249.5px;top:330px;width:89.3px;height:14px;overflow:hidden"><div class="t" style="left:0.20px;top:2.77px;font-size:9.6px;line-height:9.6px;color:#000;transform:scaleX(0.8656);transform-origin:0 0;">TICAL_IC DDR_MEM DDR</div>
</div><div class="t" style="left:182.30px;top:343.57px;font-size:9.6px;line-height:9.6px;color:#000;transform:scaleX(1.0271);transform-origin:0 0;">Item 1</div>
<div class="t" style="left:361.50px;top:332.67px;font-size:9.6px;line-height:9.6px;color:#000;transform:scaleX(0.8968);transform-origin:0 0;">PWR, GND</div>
<div class="t" style="left:447.20px;top:332.67px;font-size:9.6px;line-height:9.6px;color:#000;transform:scaleX(1.0866);transform-origin:0 0;">Input</div>
<div class="a" style="left:167px;top:580px;width:9px;height:9px;background:#fff;border:1px solid #7a7a7a;border-right-color:#dcdcdc;border-bottom-color:#dcdcdc"></div>
<div class="t" style="left:180.50px;top:579.33px;font-size:10px;line-height:10px;color:#000;transform:scaleX(0.8748);transform-origin:0 0;">Include Pass Data</div>
<div class="a" style="left:7px;top:599px;width:67px;height:19px;background:#f0f0f0;border:1px solid #fafafa;border-right-color:#6a6a6a;border-bottom-color:#6a6a6a;box-shadow:inset -1px -1px 0 #a0a0a0"></div>
<div class="t" style="left:25.70px;top:603.83px;font-size:9.3px;line-height:9.3px;color:#000;transform:scaleX(1.0225);transform-origin:0 0;">Save...</div>
<div class="a" style="left:77px;top:599px;width:66px;height:19px;background:#f0f0f0;border:1px solid #fafafa;border-right-color:#6a6a6a;border-bottom-color:#6a6a6a;box-shadow:inset -1px -1px 0 #a0a0a0"></div>
<div class="t" style="left:88.70px;top:603.83px;font-size:9.3px;line-height:9.3px;color:#000;transform:scaleX(1.0174);transform-origin:0 0;">Save As...</div>
<div class="a" style="left:146px;top:599px;width:66px;height:19px;background:#f0f0f0;border:1px solid #fafafa;border-right-color:#6a6a6a;border-bottom-color:#6a6a6a;box-shadow:inset -1px -1px 0 #a0a0a0"></div>
<div class="t" style="left:164.05px;top:603.83px;font-size:9.3px;line-height:9.3px;color:#000;transform:scaleX(1.0513);transform-origin:0 0;">Load...</div>
<div class="a" style="left:215px;top:599px;width:66px;height:19px;background:#f0f0f0;border:1px solid #fafafa;border-right-color:#6a6a6a;border-bottom-color:#6a6a6a;box-shadow:inset -1px -1px 0 #a0a0a0"></div>
<div class="t" style="left:221.80px;top:603.83px;font-size:9.3px;line-height:9.3px;color:#000;transform:scaleX(1.0821);transform-origin:0 0;">Point Tool...</div>
<div class="a" style="left:353px;top:599px;width:211px;height:19px;background:#f0f0f0;border:1px solid #6a6a6a;border-bottom-width:2px;border-right-width:2px;box-shadow:inset 1px 1px 0 #fafafa,inset -1px -1px 0 #a0a0a0"></div>
<div class="t" style="left:423.25px;top:603.83px;font-size:9.3px;line-height:9.3px;color:#000;transform:scaleX(1.0255);transform-origin:0 0;">Start Checking...</div>
<div class="a" style="left:570px;top:599px;width:66px;height:19px;background:#f0f0f0;border:1px solid #fafafa;border-right-color:#6a6a6a;border-bottom-color:#6a6a6a;box-shadow:inset -1px -1px 0 #a0a0a0"></div>
<div class="t" style="left:591.95px;top:603.83px;font-size:9.3px;line-height:9.3px;color:#000;transform:scaleX(0.9295);transform-origin:0 0;">Close</div>
<div class="a" style="left:26px;top:613px;width:5px;height:1px;background:#555;"></div>
<div class="a" style="left:164.5px;top:613px;width:5px;height:1px;background:#555;"></div>
</body></html>
